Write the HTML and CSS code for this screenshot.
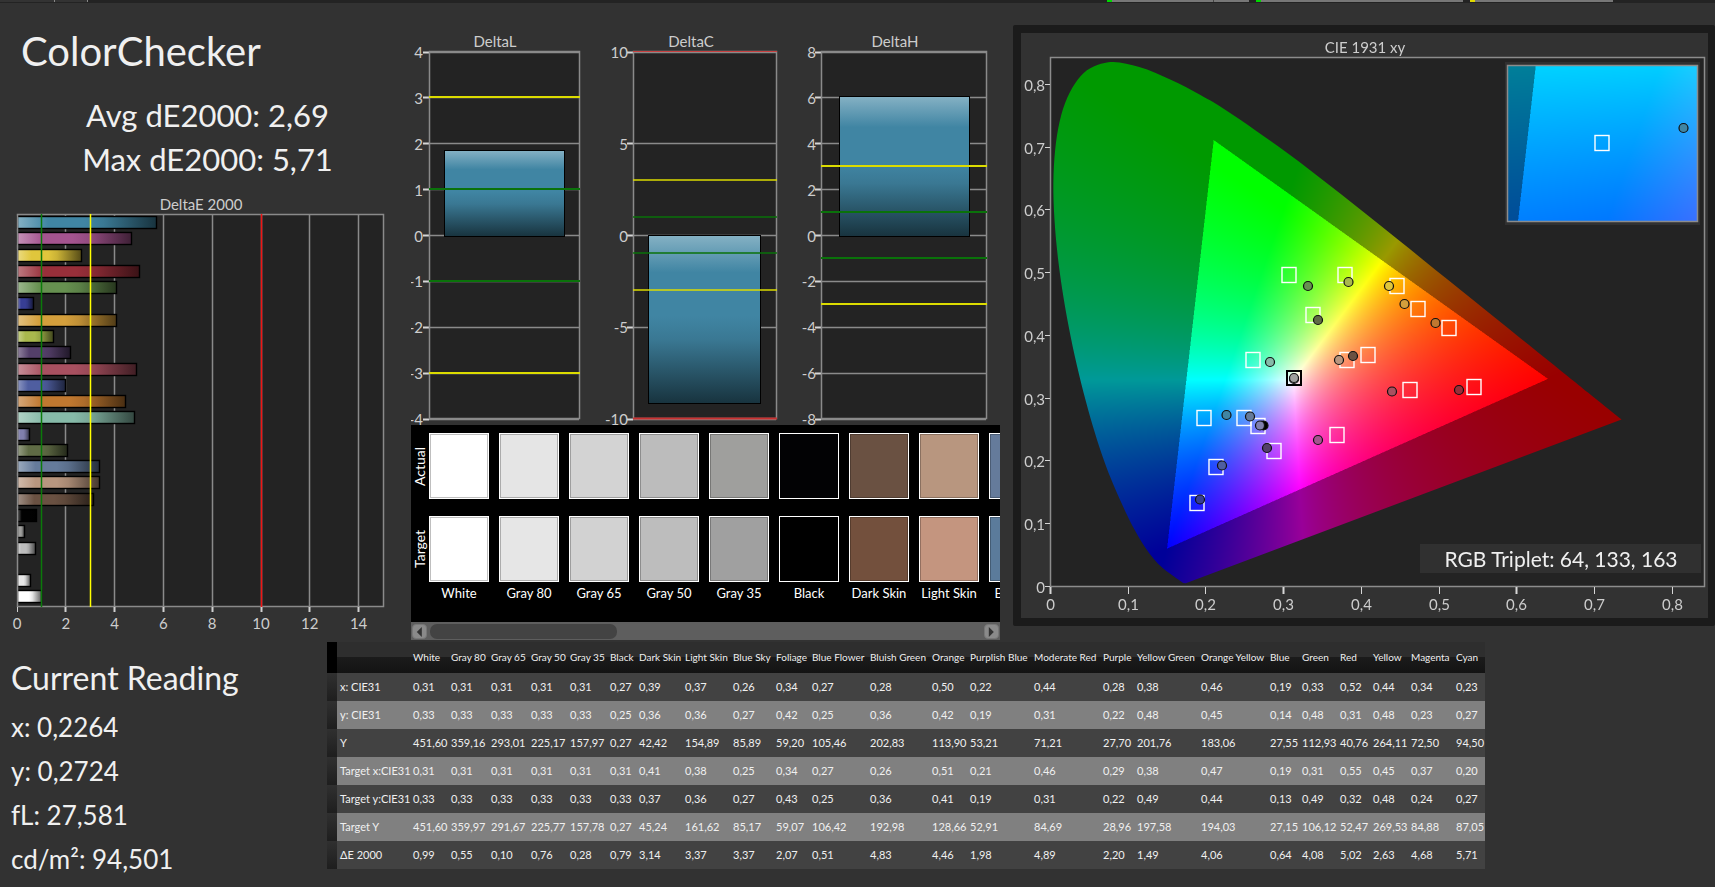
FILE: index.html
```
<!DOCTYPE html>
<html lang="en">
<head>
<meta charset="utf-8">
<title>ColorChecker</title>
<link rel="stylesheet" href="styles.css">
</head>
<body>
<div class="topstrip"><span class="s-tab"></span><span class="s-tab s-tab2"></span><span class="s-gap"></span><span class="s-meter green m1"></span><span class="s-meter m2"></span><span class="s-sep"></span><span class="s-meter green m3"></span><span class="s-sep"></span><span class="s-meter yellow m4"></span><span class="s-end"></span></div>
<main>
  <section class="upper">
    <div class="left">
      <h1>ColorChecker</h1>
      <div class="stats"><p>Avg dE2000: 2,69</p><p>Max dE2000: 5,71</p></div>
      <svg id="deltaE" class="chart" viewBox="0 192 411 448" role="img" aria-label="DeltaE 2000"></svg>
    </div>
    <div class="middle">
      <svg id="deltas" class="chart" viewBox="411 24 589 401" role="img" aria-label="DeltaL, DeltaC, DeltaH"></svg>
      <div class="swatches">
        <div class="sides"><span>Actual</span><span>Target</span></div>
        <div class="strip" id="strip"></div>
      </div>
      <div class="scrollbar">
        <button type="button" aria-label="Scroll left"><svg viewBox="0 0 8 12"><path d="M7 0V12L1 6Z"/></svg></button>
        <div class="track"><div class="thumb"></div></div>
        <button type="button" aria-label="Scroll right"><svg viewBox="0 0 8 12"><path d="M1 0V12L7 6Z"/></svg></button>
      </div>
    </div>
    <div class="right">
      <canvas id="gamut" width="687" height="585"></canvas>
      <svg id="cie" class="chart" viewBox="1021 33 687 585" role="img" aria-label="CIE 1931 xy"></svg>
    </div>
  </section>
  <section class="lower">
    <div class="reading">
      <h2>Current Reading</h2>
      <p>x: 0,2264</p><p>y: 0,2724</p><p>fL: 27,581</p><p>cd/m²: 94,501</p>
    </div>
    <table>
      <colgroup><col class="mark"><col class="name"><col><col><col><col><col><col><col><col><col><col><col><col><col><col><col><col><col><col><col><col><col><col><col><col></colgroup>
      <thead><tr><th></th><th></th><th>White</th><th>Gray 80</th><th>Gray 65</th><th>Gray 50</th><th>Gray 35</th><th>Black</th><th>Dark Skin</th><th>Light Skin</th><th>Blue Sky</th><th>Foliage</th><th>Blue Flower</th><th>Bluish Green</th><th>Orange</th><th>Purplish Blue</th><th>Moderate Red</th><th>Purple</th><th>Yellow Green</th><th>Orange Yellow</th><th>Blue</th><th>Green</th><th>Red</th><th>Yellow</th><th>Magenta</th><th>Cyan</th></tr></thead>
      <tbody>
      <tr><td></td><th>x: CIE31</th><td>0,31</td><td>0,31</td><td>0,31</td><td>0,31</td><td>0,31</td><td>0,27</td><td>0,39</td><td>0,37</td><td>0,26</td><td>0,34</td><td>0,27</td><td>0,28</td><td>0,50</td><td>0,22</td><td>0,44</td><td>0,28</td><td>0,38</td><td>0,46</td><td>0,19</td><td>0,33</td><td>0,52</td><td>0,44</td><td>0,34</td><td>0,23</td></tr>
      <tr><td></td><th>y: CIE31</th><td>0,33</td><td>0,33</td><td>0,33</td><td>0,33</td><td>0,33</td><td>0,25</td><td>0,36</td><td>0,36</td><td>0,27</td><td>0,42</td><td>0,25</td><td>0,36</td><td>0,42</td><td>0,19</td><td>0,31</td><td>0,22</td><td>0,48</td><td>0,45</td><td>0,14</td><td>0,48</td><td>0,31</td><td>0,48</td><td>0,23</td><td>0,27</td></tr>
      <tr><td></td><th>Y</th><td>451,60</td><td>359,16</td><td>293,01</td><td>225,17</td><td>157,97</td><td>0,27</td><td>42,42</td><td>154,89</td><td>85,89</td><td>59,20</td><td>105,46</td><td>202,83</td><td>113,90</td><td>53,21</td><td>71,21</td><td>27,70</td><td>201,76</td><td>183,06</td><td>27,55</td><td>112,93</td><td>40,76</td><td>264,11</td><td>72,50</td><td>94,50</td></tr>
      <tr><td></td><th>Target x:CIE31</th><td>0,31</td><td>0,31</td><td>0,31</td><td>0,31</td><td>0,31</td><td>0,31</td><td>0,41</td><td>0,38</td><td>0,25</td><td>0,34</td><td>0,27</td><td>0,26</td><td>0,51</td><td>0,21</td><td>0,46</td><td>0,29</td><td>0,38</td><td>0,47</td><td>0,19</td><td>0,31</td><td>0,55</td><td>0,45</td><td>0,37</td><td>0,20</td></tr>
      <tr><td></td><th>Target y:CIE31</th><td>0,33</td><td>0,33</td><td>0,33</td><td>0,33</td><td>0,33</td><td>0,33</td><td>0,37</td><td>0,36</td><td>0,27</td><td>0,43</td><td>0,25</td><td>0,36</td><td>0,41</td><td>0,19</td><td>0,31</td><td>0,22</td><td>0,49</td><td>0,44</td><td>0,13</td><td>0,49</td><td>0,32</td><td>0,48</td><td>0,24</td><td>0,27</td></tr>
      <tr><td></td><th>Target Y</th><td>451,60</td><td>359,97</td><td>291,67</td><td>225,77</td><td>157,78</td><td>0,27</td><td>45,24</td><td>161,62</td><td>85,17</td><td>59,07</td><td>106,42</td><td>192,98</td><td>128,66</td><td>52,91</td><td>84,69</td><td>28,96</td><td>197,58</td><td>194,03</td><td>27,15</td><td>106,12</td><td>52,47</td><td>269,53</td><td>84,88</td><td>87,05</td></tr>
      <tr><td></td><th>ΔE 2000</th><td>0,99</td><td>0,55</td><td>0,10</td><td>0,76</td><td>0,28</td><td>0,79</td><td>3,14</td><td>3,37</td><td>3,37</td><td>2,07</td><td>0,51</td><td>4,83</td><td>4,46</td><td>1,98</td><td>4,89</td><td>2,20</td><td>1,49</td><td>4,06</td><td>0,64</td><td>4,08</td><td>5,02</td><td>2,63</td><td>4,68</td><td>5,71</td></tr>
      </tbody>
    </table>
  </section>
</main>
<script src="charts.js"></script>
</body>
</html>
```

FILE: styles.css
```
* { box-sizing: border-box; }
body { margin: 0; background: #323232; color: #f0f0f0; font-family: Lato, "Noto Sans", sans-serif; overflow-x: hidden; }
h1, h2, p { margin: 0; font-weight: 400; }

.topstrip { display: flex; height: 3px; background: #232323; }
.topstrip span { height: 2px; min-width: 0; flex-basis: 0; }
.s-tab { flex-grow: 54; background: #333; border-right: 1px solid #888; }
.s-tab2 { flex-grow: 32; }
.s-gap { flex-grow: 1020; }
.s-meter { background: #777; }
.green { border-left: 5px solid #00d800; }
.yellow { border-left: 5px solid #e0d800; }
.topstrip .m1 { flex-grow: 101; border-right: 1px solid #444; }
.topstrip .m2 { flex-grow: 35; }
.topstrip .m3 { flex-grow: 203; }
.topstrip .m4 { flex-grow: 138; }
.s-sep { flex-grow: 7; }
.s-end { flex-grow: 102; }

.upper { display: grid; grid-template-columns: minmax(0, 411fr) minmax(0, 589fr) minmax(0, 715fr); align-items: start; }
.chart { display: block; width: 100%; height: auto; }
.chart text { font-size: 15px; fill: #cdcdcd; }
.chart .big { font-size: 21px; fill: #f0f0f0; }
.mid { text-anchor: middle; }
.end { text-anchor: end; }

.left h1 { padding: 22px 0 0 21px; font-size: 40px; line-height: 52px; }
.stats { padding: 16px 0 11px 4px; text-align: center; font-size: 31px; line-height: 44px; }

.middle { padding-top: 21px; }
.swatches { display: flex; height: 197px; background: #000; color: #fff; font-size: 13px; overflow: hidden; }
.sides { flex: none; width: 18px; padding-top: 8px; display: flex; flex-direction: column; gap: 17px; }
.sides span { height: 66px; writing-mode: vertical-rl; transform: rotate(180deg); text-align: center; line-height: 18px; font-size: 14px; }
.strip { display: flex; flex: 1; min-width: 0; gap: 10px; padding-top: 8px; overflow: hidden; }
.patch { flex: none; width: 60px; display: grid; grid-template-rows: 66px 66px 20px; row-gap: 17px; text-align: center; white-space: nowrap; }
.patch span { line-height: 16px; margin-top: -14px; }
.swatch { border: 1px solid #fff; box-shadow: inset 0 0 0 1px rgba(0, 0, 0, 0.25); }
.scrollbar { display: flex; align-items: center; gap: 3px; height: 18px; padding: 0 1px; background: #5e5e5e; }
.scrollbar button { width: 15px; height: 15px; padding: 2px; border: 1px solid #777; border-radius: 4px; background: #8a8a8a; display: flex; justify-content: center; }
.scrollbar button svg { height: 10px; fill: #333; }
.track { flex: 1; height: 15px; }
.thumb { width: 34%; height: 15px; border-radius: 7px; background: #434343; }

.right { margin: 22px 0 0 13px; padding: 8px 7px 8px 8px; background: #1b1b1b; display: grid; border-radius: 2px; }
.right canvas, .right svg { grid-area: 1 / 1; width: 100%; height: auto; }
.right canvas { background: #323232; }

.lower { display: flex; align-items: flex-start; padding-top: 2px; }
.reading { width: 327px; flex: none; padding: 12px 0 0 11px; font-size: 26px; line-height: 44px; }
.reading h2 { margin-bottom: 3px; font-size: 32px; line-height: 48px; }

table { border-collapse: collapse; table-layout: fixed; width: 1158px; flex: none; font-size: 11px; color: #f0f0f0; }
th, td { padding: 0 0 0 3px; text-align: left; font-weight: 400; white-space: nowrap; height: 28px; line-height: 28px; }
thead th { height: 31px; font-size: 10px; line-height: 31px; background: linear-gradient(#2e2e2e 50%, #1b1b1b 50%, #131313); }
thead th:first-child { background: #000; }
tbody tr { background: #424242; }
tbody tr:nth-child(even) { background: #808080; }
tbody td:first-child { background: linear-gradient(#303030, #1e1e1e); }
col { width: 38px; }
.mark { width: 10px; }
.name { width: 73px; }
col:nth-child(4), col:nth-child(5), col:nth-child(7) { width: 40px; }
col:nth-child(6) { width: 39px; }
col:nth-child(8) { width: 29px; }
col:nth-child(9) { width: 46px; }
col:nth-child(10) { width: 48px; }
col:nth-child(11) { width: 43px; }
col:nth-child(12) { width: 36px; }
col:nth-child(13) { width: 58px; }
col:nth-child(14) { width: 62px; }
col:nth-child(16), col:nth-child(19) { width: 64px; }
col:nth-child(17), col:nth-child(20) { width: 69px; }
col:nth-child(18) { width: 34px; }
col:nth-child(21), col:nth-child(26) { width: 32px; }
col:nth-child(23) { width: 33px; }
col:nth-child(25) { width: 45px; }
```

FILE: charts.js
```
const el = (id) => document.getElementById(id);
const line = (x1, y1, x2, y2, c, w = 1) => `<line x1="${x1}" y1="${y1}" x2="${x2}" y2="${y2}" stroke="${c}" stroke-width="${w}"/>`;
const rect = (x, y, w, h, fill, stroke = "none", sw = 1) => `<rect x="${x}" y="${y}" width="${w}" height="${h}" fill="${fill}" stroke="${stroke}" stroke-width="${sw}"/>`;
const text = (x, y, t, cls) => `<text x="${x}" y="${y}" class="${cls}">${t}</text>`;
const snap = (v) => Math.floor(v) + 0.5;
const GRID = "#8a8a8a";

function shade(hex, k) {
  return "#" + [1, 3, 5].map((i) => {
    const v = parseInt(hex.substr(i, 2), 16);
    const n = k > 0 ? v + (255 - v) * k : v * (1 + k);
    return Math.round(n).toString(16).padStart(2, "0");
  }).join("");
}
function gradient(id, hex, vertical) {
  const end = vertical ? 'x2="0" y2="1"' : 'x2="1" y2="0"';
  return `<linearGradient id="${id}" x1="0" y1="0" ${end}><stop offset="0" stop-color="${shade(hex, 0.36)}"/><stop offset=".22" stop-color="${hex}"/><stop offset=".48" stop-color="${hex}"/><stop offset=".62" stop-color="${shade(hex, -0.1)}"/><stop offset="1" stop-color="${shade(hex, -0.62)}"/></linearGradient>`;
}

/* DeltaE 2000 bars */
const bars = [[5.71, "#4085a3"], [4.68, "#a4548f"], [2.63, "#e0c63c"], [5.02, "#982f3a"], [4.08, "#669050"], [0.64, "#373e94"], [4.06, "#d49f3c"], [1.49, "#a9b84d"], [2.2, "#543f6a"], [4.89, "#a85060"], [1.98, "#4f5ea0"], [4.46, "#c07830"], [4.83, "#86baa8"], [0.51, "#807fad"], [2.07, "#5f6b45"], [3.37, "#657b9b"], [3.37, "#b8967f"], [3.14, "#6a5142"], [0.79, "#020202"], [0.28, "#9f9f9d"], [0.76, "#bcbcbc"], [0, "#d3d3d3"], [0.55, "#e6e6e6"], [0.99, "#ffffff"]];
{
  const x = (v) => 17 + v * 24.4;
  let s = "<defs>" + bars.map((b, i) => gradient("e" + i, b[1], false)).join("") + "</defs>";
  s += text(201, 210, "DeltaE 2000", "mid") + rect(17, 215, 367, 391, "#232323");
  for (let v = 2; v < 15; v += 2) s += line(snap(x(v)), 215, snap(x(v)), 606, GRID, 1.5);
  bars.forEach((b, i) => {
    if (b[0]) s += rect(17.5, Math.round(216 + i * 16.28) + 0.5, Math.round(b[0] * 24.3), 12, `url(#e${i})`, "#000", 1.4);
  });
  s += rect(17.5, 214.5, 366, 392, "none", GRID, 1.5);
  s += line(41.5, 214, 41.5, 607, "#0a7a0a", 1.5) + line(90.5, 214, 90.5, 607, "#ffff00", 1.5) + line(261.5, 214, 261.5, 607, "#f01414", 1.5);
  for (let v = 0; v < 15; v += 2) s += line(snap(x(v)), 607, snap(x(v)), 612, "#cfcfcf", v ? 2 : 1) + text(x(v), 629, v, "mid");
  el("deltaE").innerHTML = s;
}

/* DeltaL, DeltaC and DeltaH */
{
  const defs = [
    { t: "DeltaL", tx: 495, l: 429, r: 579, max: 4, step: 1, v: 1.84, bl: 444, br: 564, end: 423 },
    { t: "DeltaC", tx: 691, l: 633, r: 776, max: 10, step: 5, v: -9.12, bl: 648, br: 760, end: 628 },
    { t: "DeltaH", tx: 895, l: 821, r: 986, max: 8, step: 2, v: 6.02, bl: 839, br: 969, end: 816 }
  ];
  let s = "<defs>" + gradient("d", "#4085a3", true) + "</defs>";
  for (const d of defs) {
    const y = (v) => 235.5 - (v / d.max) * 183.5;
    s += text(d.tx, 47, d.t, "mid") + rect(d.l, 52, d.r - d.l, 366, "#232323");
    for (let v = -d.max; v <= d.max; v += d.step) {
      s += line(d.l - 6, snap(y(v)), d.l, snap(y(v)), "#d6d6d6", 2) + text(d.end, y(v) + 6, v, "end");
      s += line(d.l, snap(y(v)), d.r, snap(y(v)), GRID, 1.5);
    }
    const a = Math.round(Math.min(y(0), y(d.v))), b = Math.round(Math.max(y(0), y(d.v)));
    s += rect(d.l + 0.5, 51.5, d.r - d.l, 367, "none", GRID, 1.5);
    s += rect(d.bl + 0.5, a - 0.5, d.br - d.bl, b - a + 1, "url(#d)", "#000");
    const thin = d.max === 10 ? 1.6 : 2;
    for (const k of [1, -1]) {
      const green = Math.floor(y(k)), yellow = Math.floor(y(3 * k));
      s += line(d.l, green, d.r + 1, green, "#0a720a", thin) + line(d.l, yellow, d.r + 1, yellow, "#dcdc00", thin);
    }
    if (d.max === 10) s += line(d.l, 51.5, d.r + 1, 51.5, "#c84040") + line(d.l, 418.5, d.r + 1, 418.5, "#c83030", 2);
  }
  el("deltas").innerHTML = s;
}

/* Patch strip */
el("strip").innerHTML = [["White", "#ffffff", "#ffffff"], ["Gray 80", "#e5e5e5", "#e6e6e6"], ["Gray 65", "#d3d3d3", "#d2d2d2"], ["Gray 50", "#bcbcbc", "#bdbdbd"], ["Gray 35", "#9f9f9d", "#a0a0a0"], ["Black", "#020204", "#000000"], ["Dark Skin", "#6a5142", "#73503d"], ["Light Skin", "#b8967f", "#c4957f"], ["Blue Sky", "#657b9b", "#5b7b9b"]]
  .map((p) => `<div class="patch"><div class="swatch" style="background:${p[1]}"></div><div class="swatch" style="background:${p[2]}"></div><span>${p[0]}</span></div>`).join("");

/* Chromaticity fill: full brightness inside the gamut triangle, dimmed outside */
const X0 = 1050.5, Y0 = 586.3, KX = 777.3, KY = 628.5, OX = 1021, OY = 33;
const R = [0.64, 0.33], G = [0.21, 0.71], B = [0.15, 0.06];
const side = (p, q, x, y) => (q[0] - p[0]) * (y - p[1]) - (q[1] - p[1]) * (x - p[0]) >= 0;
function colour(x, y) {
  const X = x / y, Z = (1 - x - y) / y;
  const c = [3.2404542 * X - 1.5371385 - 0.4985314 * Z, -0.969266 * X + 1.8760108 + 0.041556 * Z, 0.0556434 * X - 0.2040259 + 1.0572252 * Z];
  const k = side(R, G, x, y) && side(G, B, x, y) && side(B, R, x, y) ? 1 : 0.6;
  const m = Math.max(...c);
  return c.map((v) => 255 * k * Math.max(v, 0) / m);
}
function field(w, h, toX, toY) {
  const c = document.createElement("canvas");
  c.width = w; c.height = h;
  const g = c.getContext("2d"), im = g.createImageData(w, h);
  for (let j = 0; j < h; j++) for (let i = 0; i < w; i++) {
    const sum = [0, 0, 0];
    for (const [a, b] of [[0.25, 0.25], [0.75, 0.25], [0.25, 0.75], [0.75, 0.75]]) {
      colour(toX(i + a), Math.max(toY(j + b), 0.001)).forEach((v, k) => { sum[k] += v / 4; });
    }
    im.data.set([sum[0], sum[1], sum[2], 255], (j * w + i) * 4);
  }
  g.putImageData(im, 0, 0);
  return c;
}
const locus = [[.1741, .005], [.1714, .0051], [.1689, .0069], [.1644, .0109], [.1566, .0177], [.144, .0297], [.1355, .0399], [.1241, .0578], [.1096, .0868], [.0913, .1327], [.0687, .2007], [.0454, .295], [.0235, .4127], [.0082, .5384], [.0039, .6548], [.0139, .7502], [.0389, .812], [.0743, .8338], [.1142, .8262], [.1547, .8059], [.1929, .7816], [.2296, .7543], [.3016, .6923], [.3731, .6245], [.4441, .5547], [.5125, .4866], [.5752, .4242], [.627, .3725], [.6658, .334], [.6915, .3083], [.719, .2809], [.7347, .2653]];
{
  const g = el("gamut").getContext("2d");
  g.fillStyle = "#232323";
  g.fillRect(29, 24, 655, 530);
  const p = locus.map(([x, y]) => [X0 + x * KX - OX, Y0 - y * KY - OY]);
  g.save();
  g.beginPath();
  g.moveTo(...p[0]);
  for (let i = 0; i < p.length - 1; i++) {
    const a = p[Math.max(i - 1, 0)], b = p[i], c = p[i + 1], d = p[Math.min(i + 2, p.length - 1)];
    g.bezierCurveTo(b[0] + (c[0] - a[0]) / 6, b[1] + (c[1] - a[1]) / 6, c[0] - (d[0] - b[0]) / 6, c[1] - (d[1] - b[1]) / 6, c[0], c[1]);
  }
  g.closePath();
  g.clip();
  g.drawImage(field(655, 530, (i) => (i + 29 + OX - X0) / KX, (j) => (Y0 - OY - 24 - j) / KY), 29, 24);
  g.restore();
  g.fillStyle = "#303030";
  g.fillRect(484, 29, 195, 163);
  g.drawImage(field(189, 155, (i) => 0.196 + (i - 94.5) / 2800, (j) => 0.2658 - (j - 77.5) / 2262), 487, 33);
}

/* Chromaticity axes and markers */
{
  let s = text(1365, 53, "CIE 1931 xy", "mid");
  s += rect(1050.5, 57.5, 654, 529, "none", "#8c8c8c", 1.5);
  for (let i = 0; i <= 8; i++) {
    const label = i ? "0," + i : "0";
    const x = snap(X0 + i * KX / 10), y = snap(Y0 - i * 62.75);
    s += line(x, 587, x, 594, "#d6d6d6", i % 3 ? 1 : 2) + text(x, 610, label, "mid");
    s += line(1045, y, 1050, y, "#d6d6d6", 1) + text(1045, y + 6, label, "end");
  }
  const squares = [[1289, 275], [1345, 275], [1397, 286], [1418, 309], [1449, 328], [1313, 315], [1253, 360], [1347, 360], [1368, 355], [1410, 390], [1474, 387], [1204, 418], [1244, 418], [1258, 426], [1274, 451], [1216, 467], [1197, 503], [1337, 435], [1602, 143]];
  for (const [x, y] of squares) s += rect(x - 7, y - 7.5, 14, 15, "none", "#fff", 1.4);
  s += rect(1287, 371, 14, 14, "none", "#000", 2);
  const dots = [[1308, 286, "#669050"], [1348.5, 282, "#a9b84d"], [1389, 286, "#e0c63c"], [1404.5, 304, "#d49f3c"], [1435.5, 323, "#c07830"], [1318, 320, "#5f6b45"], [1270, 362, "#86baa8"], [1339, 360, "#b8967f"], [1353, 356, "#6a5142"], [1392, 391.5, "#a85060"], [1459, 390, "#982f3a"], [1226.5, 415, "#4085a3"], [1250, 416.5, "#657b9b"], [1263.5, 425.5, "#000000"], [1260, 425.5, "#807fad"], [1267, 448, "#543f6a"], [1222, 465.5, "#4f5ea0"], [1200, 499.5, "#373e94"], [1318, 440, "#a4548f"], [1294, 379, "#9f9f9d"], [1294, 378, "#9f9f9d"], [1683.5, 128, "#4085a3"]];
  for (const [x, y, c] of dots) s += `<circle cx="${x}" cy="${y}" r="4.5" fill="${c}" stroke="#101010" stroke-width="1.2"/>`;
  s += rect(1507.5, 65.5, 190, 156, "none", "#8c8c8c", 1.5);
  s += rect(1420, 544, 281, 29, "#303030") + text(1561, 567, "RGB Triplet: 64, 133, 163", "big mid");
  el("cie").innerHTML = s;
}
```
